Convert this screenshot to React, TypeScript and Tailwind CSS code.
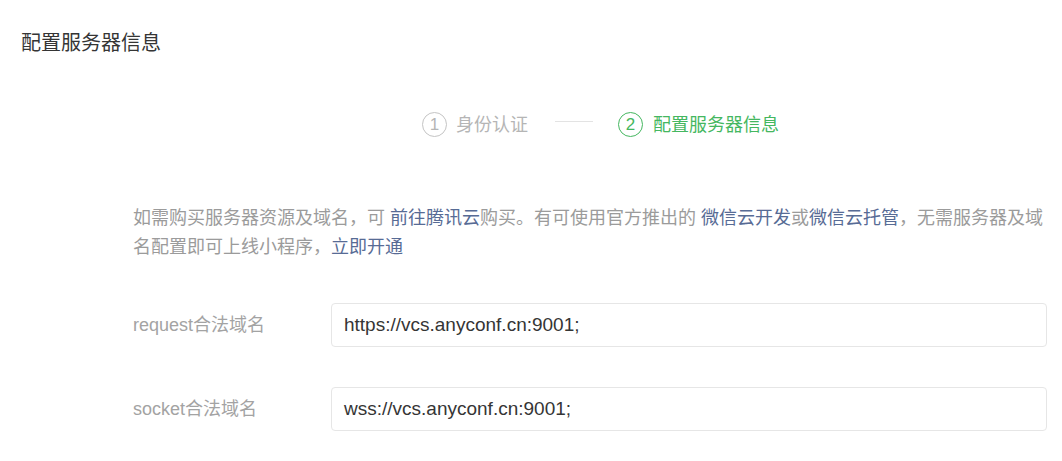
import React from "react";

const font = { fontFamily: '"Liberation Sans", "Noto Sans CJK SC", sans-serif' };

function Field({ label, value }: { label: string; value: string }) {
  return (
    <div className="flex items-center h-[44px]">
      <div className="w-[198px] shrink-0 text-[18px] text-[#a3a3a3]">{label}</div>
      <div className="flex-1 h-[44px] border border-[#e6e6e6] rounded-[4px] bg-white flex items-center px-[12px] text-[19px] text-[#353535]">
        {value}
      </div>
    </div>
  );
}

export default function App() {
  return (
    <div className="w-[1062px] h-[461px] bg-white overflow-hidden" style={font}>
      <div className="pl-[21px] pt-[29px] leading-[28px] text-[20px] text-[#353535]">配置服务器信息</div>

      <div className="mt-[55px] ml-[422px] flex items-center h-[25px]">
        <div className="w-[25px] h-[25px] rounded-full border-[1.5px] border-[#c4c4c4] flex items-center justify-center text-[17px] text-[#b5b5b5] leading-none">
          1
        </div>
        <div className="ml-[9px] text-[18px] text-[#b5b5b5] leading-none">身份认证</div>
        <div className="ml-[27px] w-[38px] h-px bg-[#e3e3e3] -mt-[6px]" />
        <div className="ml-[25px] w-[25px] h-[25px] rounded-full border-[1.5px] border-[#45b760] flex items-center justify-center text-[17px] text-[#45b760] leading-none">
          2
        </div>
        <div className="ml-[10px] text-[18px] text-[#45b760] leading-none">配置服务器信息</div>
      </div>

      <div className="ml-[133px] mr-[15px]">
        <p className="mt-[67px] text-[18px] leading-[29px] text-[#9b9b9b]">
          如需购买服务器资源及域名，可 <span className="text-[#576b95]">前往腾讯云</span>购买。有可使用官方推出的{" "}
          <span className="text-[#576b95]">微信云开发</span>或<span className="text-[#576b95]">微信云托管</span>
          ，无需服务器及域名配置即可上线小程序，<span className="text-[#576b95]">立即开通</span>
        </p>

        <div className="mt-[41px] flex flex-col gap-[40px]">
          <Field label="request合法域名" value="https://vcs.anyconf.cn:9001;" />
          <Field label="socket合法域名" value="wss://vcs.anyconf.cn:9001;" />
        </div>
      </div>
    </div>
  );
}
